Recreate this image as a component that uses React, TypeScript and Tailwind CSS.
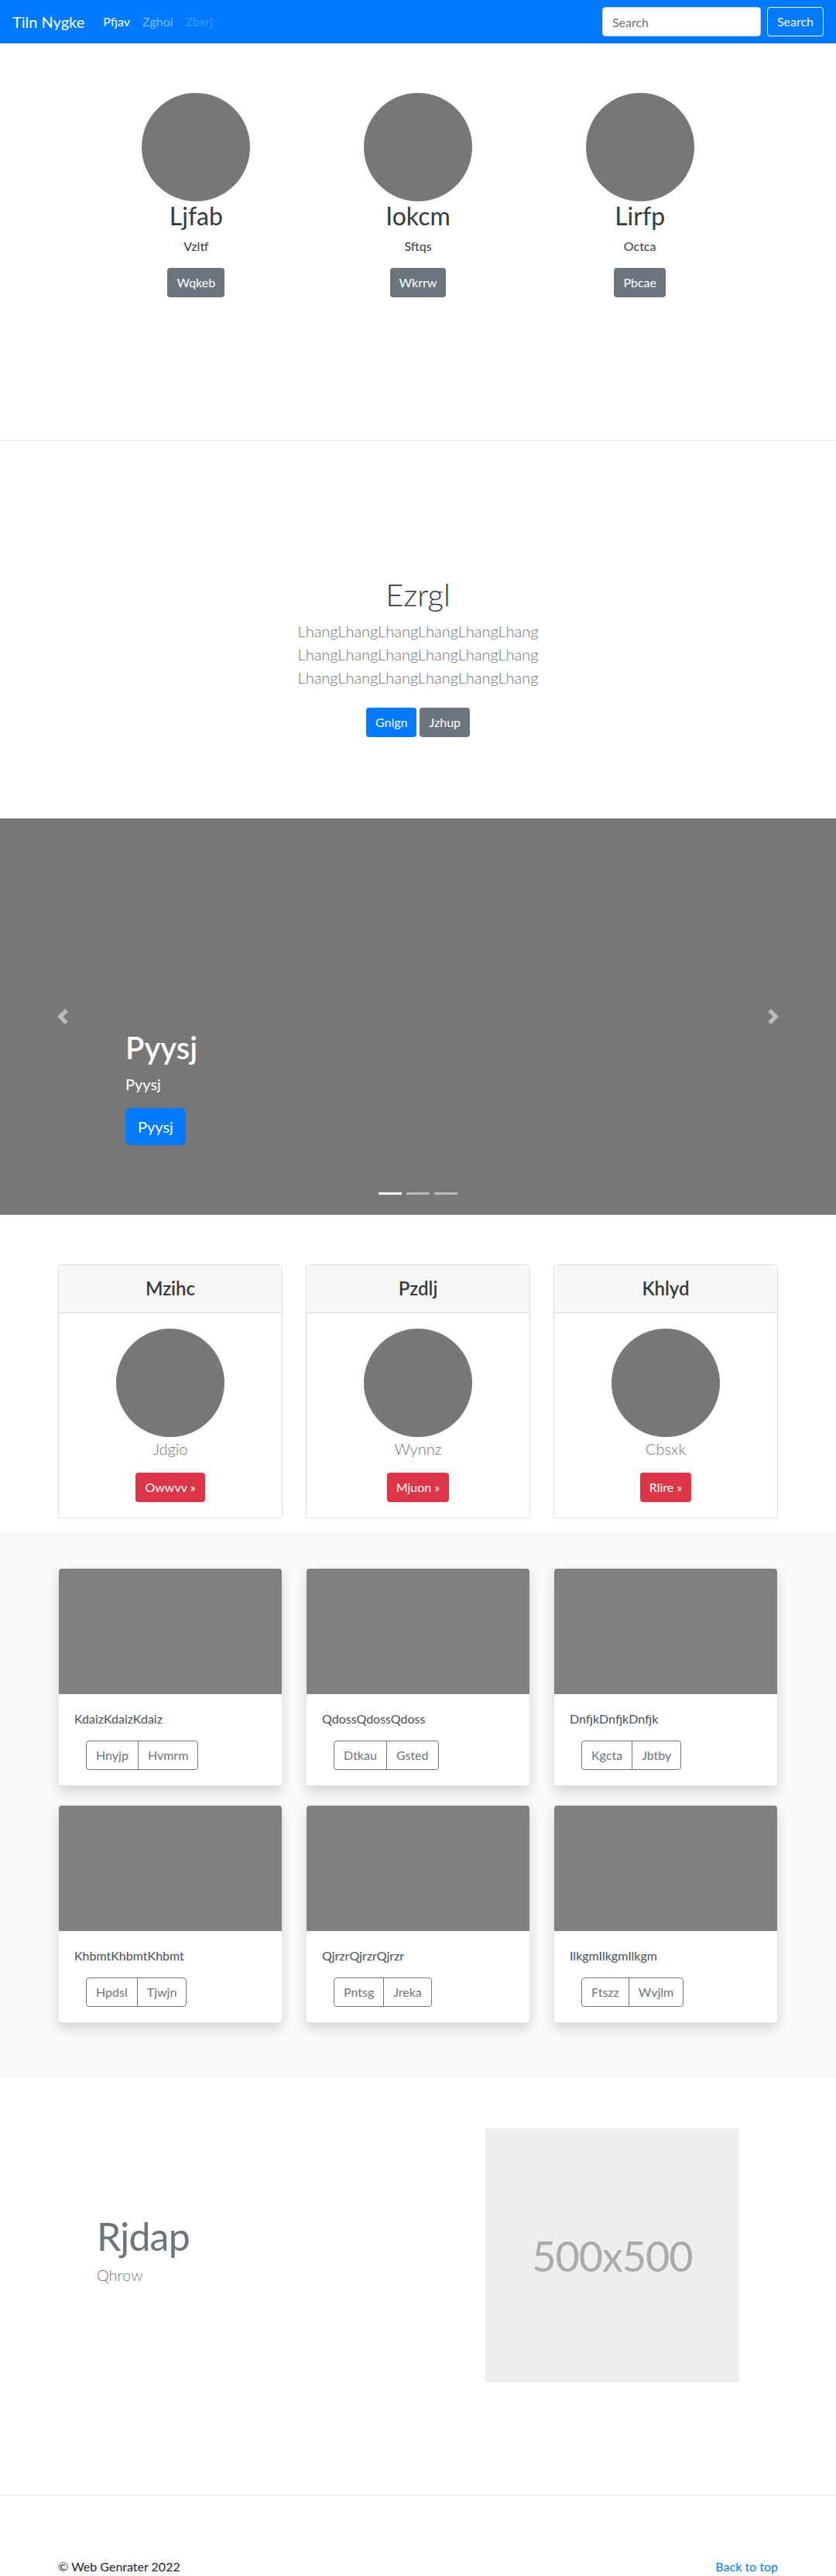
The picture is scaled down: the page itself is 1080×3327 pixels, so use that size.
import React from "react";

const Circle = () => <div className="w-[140px] h-[140px] rounded-full bg-[#777777] shrink-0" />;

const top = [
  { t: "Ljfab", s: "Vzltf", b: "Wqkeb" },
  { t: "Iokcm", s: "Sftqs", b: "Wkrrw" },
  { t: "Lirfp", s: "Octca", b: "Pbcae" },
];

const pricing = [
  { h: "Mzihc", s: "Jdgio", b: "Owwvv »" },
  { h: "Pzdlj", s: "Wynnz", b: "Mjuon »" },
  { h: "Khlyd", s: "Cbsxk", b: "Rlire »" },
];

const album = [
  { t: "KdaizKdaizKdaiz", a: "Hnyjp", b: "Hvmrm" },
  { t: "QdossQdossQdoss", a: "Dtkau", b: "Gsted" },
  { t: "DnfjkDnfjkDnfjk", a: "Kgcta", b: "Jbtby" },
  { t: "KhbmtKhbmtKhbmt", a: "Hpdsl", b: "Tjwjn" },
  { t: "QjrzrQjrzrQjrzr", a: "Pntsg", b: "Jreka" },
  { t: "IlkgmIlkgmIlkgm", a: "Ftszz", b: "Wvjlm" },
];

export default function App() {
  return (
    <div className="font-['Lato',sans-serif] text-[#212529] bg-white w-[1080px] text-[16px] leading-[1.5]">
      {/* Navbar */}
      <nav className="h-[56px] bg-[#007bff] flex items-center justify-between px-4">
        <div className="flex items-center">
          <span className="text-white text-[20px] mr-4">Tiln Nygke</span>
          <a className="px-2 text-white">Pfjav</a>
          <a className="px-2 text-white/50">Zghoi</a>
          <a className="px-2 text-white/25">Zbsrj</a>
        </div>
        <div className="flex items-center">
          <input
            placeholder="Search"
            className="w-[205px] h-[38px] rounded-[4px] bg-white px-3 text-[16px] text-[#495057] placeholder:text-[#6c757d] border border-[#ced4da] mr-2 outline-none"
          />
          <button className="h-[38px] px-3 rounded-[4px] border border-[#f8f9fa] text-[#f8f9fa] text-[16px]">
            Search
          </button>
        </div>
      </nav>

      {/* Marketing circles */}
      <section className="h-[513px] border-b border-[#e5e5e5] pt-16">
        <div className="w-[860px] mx-auto grid grid-cols-3">
          {top.map((it) => (
            <div key={it.t} className="flex flex-col items-center text-center">
              <Circle />
              <h2 className="text-[32px] leading-[1.2] font-normal mb-2 text-[#343a40]">{it.t}</h2>
              <p className="mb-4 text-[#343a40]">{it.s}</p>
              <button className="h-[38px] px-3 rounded-[4px] bg-[#6c757d] text-white">{it.b}</button>
            </div>
          ))}
        </div>
      </section>

      {/* Jumbotron */}
      <section className="h-[488px] pt-[175px] text-center">
        <h1 className="text-[40px] leading-[1.2] font-light mb-2 text-[#343a40]">Ezrgl</h1>
        <p className="text-[20px] font-light text-[#6c757d] leading-[1.5]">
          LhangLhangLhangLhangLhangLhang
          <br />
          LhangLhangLhangLhangLhangLhang
          <br />
          LhangLhangLhangLhangLhangLhang
        </p>
        <div className="flex justify-center gap-1 mt-6">
          <button className="h-[38px] px-3 rounded-[4px] bg-[#007bff] text-white">Gnlgn</button>
          <button className="h-[38px] px-3 rounded-[4px] bg-[#6c757d] text-white">Jzhup</button>
        </div>
      </section>

      {/* Carousel */}
      <section className="relative h-[512px] bg-[#777777]">
        <div className="absolute left-0 top-0 bottom-0 w-[162px] flex items-center justify-center opacity-50">
          <svg width="20" height="20" viewBox="0 0 8 8" fill="#fff">
            <path d="M5.25 0l-4 4 4 4 1.5-1.5L4.25 4l2.5-2.5L5.25 0z" />
          </svg>
        </div>
        <div className="absolute right-0 top-0 bottom-0 w-[162px] flex items-center justify-center opacity-50">
          <svg width="20" height="20" viewBox="0 0 8 8" fill="#fff">
            <path d="M2.75 0l-1.5 1.5L3.75 4l-2.5 2.5L2.75 8l4-4-4-4z" />
          </svg>
        </div>
        <div className="absolute left-[162px] top-[272px] text-white">
          <h1 className="text-[40px] leading-[1.2] font-semibold mb-2">Pyysj</h1>
          <p className="text-[20px] leading-[1.5] mb-4">Pyysj</p>
          <button className="h-[48px] px-4 text-[20px] rounded-[6px] bg-[#007bff] text-white">Pyysj</button>
        </div>
        <div className="absolute left-0 right-0 bottom-[26px] flex justify-center gap-[6px]">
          <span className="w-[30px] h-[3px] bg-white" />
          <span className="w-[30px] h-[3px] bg-white/50" />
          <span className="w-[30px] h-[3px] bg-white/50" />
        </div>
      </section>

      {/* Pricing-like cards */}
      <section className="h-[408px] pt-16">
        <div className="w-[930px] mx-auto grid grid-cols-3 gap-[30px]">
          {pricing.map((c) => (
            <div key={c.h} className="border border-[#dfdfdf] rounded-[4px] overflow-hidden">
              <div className="bg-[#f7f7f7] border-b border-[#dfdfdf] py-4 text-center">
                <h4 className="text-[24px] leading-[1.2] font-semibold text-[#343a40]">{c.h}</h4>
              </div>
              <div className="p-5 flex flex-col items-center text-center">
                <Circle />
                <p className="text-[20px] leading-[1.5] font-light text-[#6c757d] mb-4">{c.s}</p>
                <button className="h-[38px] px-3 rounded-[4px] bg-[#dc3545] text-white">{c.b}</button>
              </div>
            </div>
          ))}
        </div>
      </section>

      {/* Album */}
      <section className="h-[707px] pt-[49px] bg-[#f8f9fa]">
        <div className="w-[928px] mx-auto grid grid-cols-3 gap-x-8 gap-y-[26px]">
          {album.map((c) => (
            <div key={c.t} className="bg-white rounded-[4px] overflow-hidden shadow-[0_0.5rem_1rem_rgba(0,0,0,0.15)]">
              <div className="h-[162px] bg-[#808080]" />
              <div className="p-5">
                <p className="mb-4 text-[#495057]">{c.t}</p>
                <div className="ml-[15px] inline-flex">
                  <button className="h-[38px] px-3 border border-[#6c757d] text-[#6c757d] rounded-l-[4px]">{c.a}</button>
                  <button className="h-[38px] px-3 border border-[#6c757d] text-[#6c757d] rounded-r-[4px] -ml-px">{c.b}</button>
                </div>
              </div>
            </div>
          ))}
        </div>
      </section>

      {/* Featurette */}
      <section className="h-[538px] pt-[65px]">
        <div className="w-[860px] mx-auto grid grid-cols-12">
          <div className="col-span-7 px-[15px] flex flex-col justify-center">
            <h2 className="text-[50px] leading-[1.2] text-[#6c757d] tracking-[-0.05rem] mb-[5px]">Rjdap</h2>
            <p className="text-[20px] leading-[1.5] font-light text-[#6c757d] mb-4">Qhrow</p>
          </div>
          <div className="col-span-5 px-[15px]">
            <div className="w-full aspect-square bg-[#eeeeee] flex items-center justify-center text-[54px] tracking-[-0.02em] text-[#aaaaaa]">
              500x500
            </div>
          </div>
        </div>
      </section>

      <div className="h-px bg-[#e5e5e5]" />

      {/* Footer */}
      <footer className="h-[104px] pt-[80px] w-[930px] mx-auto flex justify-between">
        <p>© Web Genrater 2022</p>
        <a className="text-[#007bff]">Back to top</a>
      </footer>
    </div>
  );
}
